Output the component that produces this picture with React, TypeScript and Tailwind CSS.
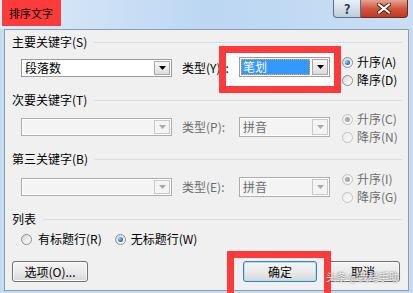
import React from "react";

const font = "font-['Noto_Sans_CJK_SC','Noto_Sans',sans-serif]";

function Radio({ checked, disabled }: { checked?: boolean; disabled?: boolean }) {
  const ring = disabled ? "border-[#c2c2c2] from-[#ececec] to-[#fafafa]" : "border-[#8d8d8d] from-[#d8d8d8] to-[#ffffff]";
  const dot = disabled ? "bg-[#a9a9a9]" : "bg-[radial-gradient(circle_at_35%_35%,#9fd2ff,#1d63b5_70%)]";
  return (
    <span className={`flex h-[11px] w-[11px] shrink-0 items-center justify-center rounded-full border bg-gradient-to-br ${ring}`}>
      {checked && <span className={`h-[5px] w-[5px] rounded-full ${dot}`} />}
    </span>
  );
}

function Arrow({ disabled }: { disabled?: boolean }) {
  return (
    <svg width="7" height="4" viewBox="0 0 7 4">
      <path d="M0 0h7L3.5 4z" fill={disabled ? "#a8a8a8" : "#000"} />
    </svg>
  );
}

function Combo({
  w,
  h,
  value,
  disabled,
  selected,
  className = "",
}: {
  w: string;
  h: string;
  value?: string;
  disabled?: boolean;
  selected?: boolean;
  className?: string;
}) {
  return (
    <div
      className={`flex ${w} ${h} shrink-0 border ${
        disabled ? "border-[#adadad] bg-[#f4f4f4] shadow-[inset_0_0_0_1px_#ffffff]" : "border-[#9c9c9c] bg-white"
      } ${className}`}
    >
      <div className="flex min-w-0 flex-1 items-center p-[1px]">
        {selected ? (
          <div className="flex h-full w-full items-center border border-dotted border-[#f5a623] bg-[#3399ff] pl-[1px] text-white">
            {value}
          </div>
        ) : (
          <span className={`pl-[2px] leading-none ${disabled ? "text-[#6d6d6d]" : "text-black"}`}>{value}</span>
        )}
      </div>
      <div
        className={`m-[1px] flex w-[16px] items-center justify-center border ${
          disabled ? "border-[#c9c9c9] bg-[#f4f4f4]" : "border-[#a8a8a8] bg-gradient-to-b from-[#f8f8f8] to-[#dcdcdc]"
        }`}
      >
        <Arrow disabled={disabled} />
      </div>
    </div>
  );
}

function Header({ children, mt }: { children: React.ReactNode; mt: string }) {
  return (
    <div className={`flex h-[14px] items-center ${mt}`}>
      <span className="leading-none whitespace-nowrap">{children}</span>
      <span className="ml-[7px] h-px flex-1 bg-[#d5dee6]" />
    </div>
  );
}

function Order({ label, checked, disabled }: { label: string; checked?: boolean; disabled?: boolean }) {
  return (
    <div className="flex h-[18px] items-center">
      <Radio checked={checked} disabled={disabled} />
      <span className={`ml-[4px] leading-none ${disabled ? "text-[#6d6d6d]" : "text-black"}`}>{label}</span>
    </div>
  );
}

function KeyRow({
  mt,
  value,
  typeLabel,
  up,
  down,
  disabled,
}: {
  mt: string;
  value?: string;
  typeLabel: string;
  up: string;
  down: string;
  disabled?: boolean;
}) {
  return (
    <div className={`flex h-[36px] items-start ${mt}`}>
      <Combo w="w-[151px]" h="h-[18px]" value={value} disabled={disabled} className={`ml-[9px] ${disabled ? "mt-[8px]" : "mt-[6px]"}`} />
      <div className={`ml-[10px] flex h-[18px] w-[57px] items-center leading-none ${disabled ? "mt-[8px] text-[#6d6d6d]" : "mt-[6px]"}`}>
        {disabled ? (
          typeLabel
        ) : (
          <>
            {typeLabel}
            <span className="relative z-10 ml-[5px]">:</span>
          </>
        )}
      </div>
      <Combo
        w="w-[91px]"
        h="h-[20px]"
        value={disabled ? "拼音" : "笔划"}
        disabled={disabled}
        selected={!disabled}
        className={`relative z-10 ${disabled ? "mt-[7px]" : "mt-[4px]"}`}
      />
      <div className="ml-[12px] flex flex-col">
        <Order label={up} checked disabled={disabled} />
        <Order label={down} disabled={disabled} />
      </div>
    </div>
  );
}

function Btn({ children, w, def, className = "" }: { children: React.ReactNode; w: string; def?: boolean; className?: string }) {
  return (
    <div
      className={`flex h-[21px] ${w} items-center justify-center rounded-[3px] border bg-gradient-to-b from-[#f3f3f3] via-[#ebebeb] to-[#d7d7d7] leading-none ${
        def ? "border-[#3c7fb1] shadow-[inset_0_0_0_1px_#a9e3fb]" : "border-[#707070] shadow-[inset_0_0_0_1px_#fcfcfc]"
      } ${className}`}
    >
      {children}
    </div>
  );
}

function TitleBar() {
  return (
    <div className="flex h-[29px] items-start bg-gradient-to-r from-[#dfeaf7] via-[#bcd7f3] to-[#c9def3]">
      <div className="ml-[2px] flex h-[26px] w-[59px] items-center bg-[#fd3b3b] pl-[7px] text-[11px] leading-none text-black">
        排序文字
      </div>
      <div className="ml-auto mr-[5px] flex">
        <div className="flex h-[18px] w-[28px] items-center justify-center rounded-bl-[4px] border border-t-0 border-[#5d6f84] bg-gradient-to-b from-[#e9f0f7] via-[#d3dfeb] to-[#bccbdb] text-[13px] font-bold leading-none text-[#2c3e52]">
          ?
        </div>
        <div className="flex h-[18px] w-[47px] items-center justify-center rounded-br-[4px] border border-l-0 border-t-0 border-[#6b2a22] bg-gradient-to-b from-[#e6a293] via-[#d0563f] to-[#c4381f]">
          <svg width="14" height="11" viewBox="0 0 14 11">
            <path d="M2 1.5l10 8M12 1.5l-10 8" stroke="#3a1a14" strokeWidth="4" strokeLinecap="square" />
            <path d="M2 1.5l10 8M12 1.5l-10 8" stroke="#fff" strokeWidth="2.2" strokeLinecap="square" />
          </svg>
        </div>
      </div>
    </div>
  );
}

export default function App() {
  return (
    <div className={`relative h-[293px] w-[413px] overflow-hidden bg-[#c6dcf2] text-[12px] text-black ${font}`}>
      <TitleBar />
      <div className="mx-[4px] h-[262px] border border-[#8b9db2] bg-[#f0f0f0] pl-[7px] pr-[6px]">
        <Header mt="mt-[5px]">主要关键字(S)</Header>
        <KeyRow mt="mt-[4px]" value="段落数" typeLabel="类型(Y)" up="升序(A)" down="降序(D)" />
        <Header mt="mt-[4px]">次要关键字(T)</Header>
        <KeyRow mt="mt-[3px]" typeLabel="类型(P):" up="升序(C)" down="降序(N)" disabled />
        <Header mt="mt-[6px]">第三关键字(B)</Header>
        <KeyRow mt="mt-[4px]" typeLabel="类型(E):" up="升序(I)" down="降序(G)" disabled />
        <Header mt="mt-[6px]">列表</Header>
        <div className="mt-[6px] flex h-[14px] items-center pl-[9px]">
          <Radio />
          <span className="ml-[6px] leading-none">有标题行(R)</span>
          <span className="ml-[13px]">
            <Radio checked />
          </span>
          <span className="ml-[5px] leading-none">无标题行(W)</span>
        </div>
        <div className="mt-[15px] flex">
          <Btn w="w-[76px]">选项(O)...</Btn>
          <Btn w="w-[74px]" def className="ml-[155px]">
            确定
          </Btn>
          <Btn w="w-[74px]" className="ml-[9px]">
            取消
          </Btn>
        </div>
      </div>

      {/* annotations */}
      <div className="absolute left-[219px] top-[46px] z-[5] h-[47px] w-[122px] border-[7px] border-[#fd3b3b] bg-white" />
      <div className="absolute left-[227px] top-[251px] z-[5] h-[50px] w-[104px] border-[7px] border-[#fd3b3b]" />
      <div className="absolute left-[326px] top-[272px] z-[6] whitespace-nowrap text-[10.5px] leading-none tracking-[-0.3px] text-white/85 [text-shadow:0_0_2px_#4a4a4a]">
        头条 @我是手助
      </div>
    </div>
  );
}
